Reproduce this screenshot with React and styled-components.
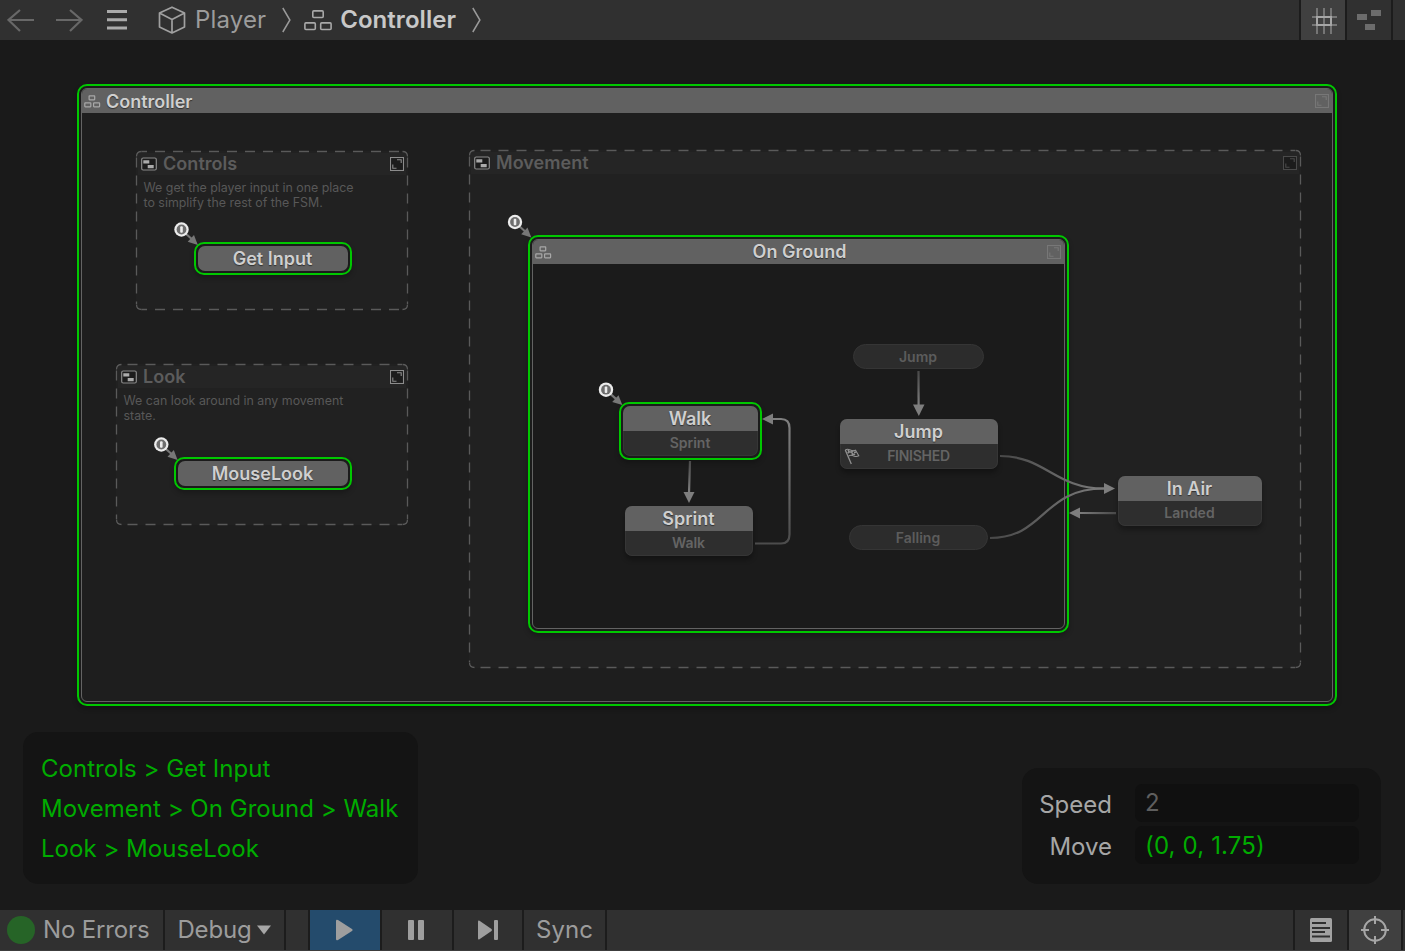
import React from "react";
import styled, { createGlobalStyle, css } from "styled-components";

const GlobalStyle = createGlobalStyle`
  * {
    box-sizing: border-box;
  }
  body {
    margin: 0;
    overflow: hidden;
    background: #1a1a1a;
    font-family: Inter, "Liberation Sans", sans-serif;
  }
  svg {
    display: block;
    flex: none;
  }
`;

const Editor = styled.div`
  display: flex;
  flex-direction: column;
  width: 1405px;
  height: 951px;
`;

const Bar = styled.div`
  display: flex;
  height: 40px;
  gap: 2px;
  background: #1c1c1c;
  color: #9c9c9c;
  font-size: 24px;
  white-space: nowrap;
`;

const BottomBar = styled(Bar)`
  height: 41px;
  border-bottom: 1px solid #3c3c3c;
`;

const Cell = styled.div`
  display: flex;
  align-items: center;
  justify-content: ${(p) => p.$justify || "center"};
  width: ${(p) => (p.$width ? `${p.$width}px` : "auto")};
  flex: ${(p) => (p.$grow ? "1" : "none")};
  background: ${(p) => p.$bg || "#303030"};
  letter-spacing: ${(p) => p.$spacing || "-0.15px"};
`;

const Label = styled.span`
  line-height: 30px;
`;

const Nav = styled.div`
  display: flex;
  align-items: center;
  gap: 20px;
  padding: 0 31px 0 7px;
`;

const Crumb = styled.div`
  display: flex;
  align-items: center;
  gap: ${(p) => p.$gap}px;
  margin-right: ${(p) => p.$after}px;
  margin-left: ${(p) => p.$before || 0}px;
  color: ${(p) => (p.$current ? "#c8c8c8" : "#9c9c9c")};
  font-weight: ${(p) => (p.$current ? 600 : 400)};
  letter-spacing: ${(p) => (p.$current ? "0.05px" : "0.15px")};
`;

const StatusDot = styled.span`
  width: 28px;
  height: 28px;
  margin: 0 8px 0 7px;
  border-radius: 50%;
  background: #266427;
`;

const Canvas = styled.div`
  position: relative;
  flex: 1;
  background: #1a1a1a;
`;

const placed = css`
  position: absolute;
  left: ${(p) => p.$x}px;
  top: ${(p) => p.$y - 40}px;
  width: ${(p) => p.$w}px;
  height: ${(p) => p.$h}px;
`;

/* a running machine or state gets the green ring */
const Ring = styled.div`
  ${placed}
  display: flex;
  padding: 2px;
  border: 2px solid #00c800;
  border-radius: 10px;
  background: #1b1b1b;
  box-shadow: 0 3px 5px rgba(0, 0, 0, 0.25);
`;

const Machine = styled.div`
  flex: 1;
  display: flex;
  flex-direction: column;
  border: 1px solid #636363;
  border-radius: 6px;
  background: ${(p) => p.$bg};
`;

const MachineHead = styled.div`
  display: flex;
  align-items: center;
  gap: 5px;
  height: 24px;
  padding: 0 3px 0 2px;
  border-radius: 5px 5px 0 0;
  background: #616161;
`;

const Title = styled.div`
  flex: ${(p) => (p.$fill ? 1 : "none")};
  text-align: center;
  color: #cfcfcf;
  font-size: 18px;
  font-weight: 600;
  line-height: ${(p) => p.$line || 24}px;
  text-shadow: 0 1px 1px rgba(0, 0, 0, 0.5);
`;

const RootTitle = styled(Title)`
  padding-top: 1px;
`;

const Spacer = styled.div`
  flex: 1;
`;

const State = styled.div`
  flex: 1;
  display: flex;
  flex-direction: column;
  overflow: hidden;
  border-radius: 7px;
  background: #2e2e2e;
`;

const StateHead = styled.div`
  height: ${(p) => (p.$only ? "100%" : "25px")};
  padding-right: 1px;
  background: #616161;
`;

const StateEvent = styled.div`
  display: grid;
  grid-template-columns: 20px 1fr 20px;
  align-items: center;
  flex: 1;
  padding: 0 4px 0 3px;
  border: 1px solid #363636;
  border-top: 0;
  border-radius: 0 0 7px 7px;
  color: #646464;
  font-size: 14px;
  font-weight: 600;
  line-height: 24px;
  text-align: center;
`;

const EventLabel = styled.span`
  grid-column: 2;
  letter-spacing: ${(p) => (p.$tight ? "-0.25px" : "0")};
`;

const Loose = styled.div`
  ${placed}
  display: flex;
  border-radius: 7px;
  box-shadow: 0 4px 5px rgba(0, 0, 0, 0.3);
`;

const GlobalEvent = styled.div`
  ${placed}
  padding-right: 1px;
  border: 1px solid #353535;
  border-radius: 13px;
  background: #2c2c2c;
  color: #5c5c5c;
  font-size: 14px;
  font-weight: 600;
  line-height: 23px;
  text-align: center;
`;

const Group = styled.div`
  ${placed}
  border-radius: 6px;
  background: #212121;
`;

const GroupHead = styled.div`
  display: flex;
  align-items: center;
  gap: 6px;
  height: 22px;
  margin: 2px 2px 0;
  padding: 0 2px 0 3px;
  background: #252525;
`;

const GroupTitle = styled.div`
  flex: 1;
  color: #5c5c5c;
  font-size: 18px;
  font-weight: 600;
  line-height: 22px;
  letter-spacing: 0.05px;
`;

const Note = styled.p`
  margin: 5px 0 0 7.5px;
  color: #585858;
  font-size: 12.4px;
  line-height: 15px;
  white-space: pre-line;
`;

const Outline = styled.svg`
  position: absolute;
  inset: 0;
  overflow: visible;
`;

const Links = styled.svg`
  position: absolute;
  inset: 0;
`;

const ActivePanel = styled.div`
  ${placed}
  padding: 17px 18px;
  border-radius: 15px;
  background: #141414;
  color: #00ac00;
  font-size: 24px;
  line-height: 40px;
  letter-spacing: 0.03px;
  white-space: nowrap;
`;

const VariablePanel = styled.div`
  ${placed}
  display: grid;
  grid-template-columns: 90px 224px;
  grid-template-rows: 38px 38px;
  column-gap: 23px;
  row-gap: 4px;
  padding: 16px 0;
  border-radius: 16px;
  background: #141414;
  font-size: 24px;
`;

const VariableName = styled.div`
  color: #a6a6a6;
  line-height: 42px;
  text-align: right;
`;

const VariableValue = styled.div`
  padding-left: 10px;
  border-radius: 7px;
  background: #101010;
  color: ${(p) => (p.$live ? "#00ac00" : "#5e5e5e")};
  line-height: ${(p) => (p.$live ? 40 : 38)}px;
  letter-spacing: ${(p) => (p.$live ? "0.15px" : 0)};
`;

const FsmIcon = ({ small, color = "#a8a8a8" }) =>
  small ? (
    <svg width="17" height="13" fill="none" stroke={color} strokeWidth="1.2">
      <rect x="5.1" y="0.8" width="5.6" height="4" rx="0.5" />
      <rect x="0.8" y="7.8" width="6" height="4" rx="0.5" />
      <rect x="9.6" y="7.8" width="6" height="4" rx="0.5" />
    </svg>
  ) : (
    <svg width="28" height="21" fill="none" stroke={color} strokeWidth="1.6">
      <rect x="8.8" y="0.9" width="10.4" height="6.6" rx="1" />
      <rect x="0.9" y="12.9" width="10.4" height="6.6" rx="1" />
      <rect x="16.7" y="12.9" width="10.4" height="6.6" rx="1" />
    </svg>
  );

const GroupIcon = () => (
  <svg width="16" height="14">
    <rect x="0.7" y="1" width="14.6" height="12" rx="1.5" fill="#1c1c1c" stroke="#8a8a8a" strokeWidth="1.2" />
    <path d="M2.3 3.3h6v3.2h-6zM6.7 8h6v3.2h-6z" fill="#ababab" />
  </svg>
);

const ExpandIcon = ({ color = "#8c8c8c", fill = "#1c1c1c" }) => (
  <svg width="14" height="14" fill="none" stroke={color}>
    <rect x="0.5" y="0.5" width="13" height="13" fill={fill} strokeWidth="1.1" />
    <path d="M7 2.8h4.2V6M2.8 7.5v3.7H6.5" strokeWidth="1.1" />
  </svg>
);

const FlagIcon = () => (
  <svg width="17" height="17" fill="none" stroke="#909090" strokeWidth="1.1">
    <path d="M1.3 2 7.3 16" strokeWidth="1.3" />
    <path d="M1.3 2c2-1.4 3.3-.8 5 0s3.5 1 5.2.2l3.3 5.6c-1.8 1-3.4.8-5 .1s-3.2-1.2-5.3.2" />
    <path d="M4 1.7l1 2 2.5.2 1.2 2.2 2.5.3M7.5 3.9l2-1.5M5 3.7 3.8 5.3M8.7 6.1 7.6 7.6M10 4.5l2.3-.4" strokeWidth="1.5" />
  </svg>
);

const NavArrow = ({ flip }) => (
  <svg width="28" height="26" fill="none" stroke="#686868" strokeWidth="2.2">
    <path d={flip ? "M1 13h25.5M15 3l11.5 10L15 24" : "M27 13H1.5M13 3 1.5 13 13 24"} />
  </svg>
);

const CrumbArrow = () => (
  <svg width="10" height="26" fill="none" stroke="#9a9a9a" strokeWidth="1.5">
    <path d="M.8 1 7.9 13 .8 25" />
  </svg>
);

const CubeIcon = () => (
  <svg width="28" height="28" fill="none" stroke="#a0a0a0" strokeWidth="1.7" strokeLinejoin="round">
    <path d="M14 1.2 26.5 7v14L14 27 1.5 21V7zM1.5 7 14 13.4 26.5 7M14 13.4V27" />
  </svg>
);

const GroupFrame = ({ x, y, w, h, title, note, phase = 11.5, expand }) => (
  <Group $x={x} $y={y} $w={w} $h={h}>
    <GroupHead>
      <GroupIcon />
      <GroupTitle>{title}</GroupTitle>
      <ExpandIcon color={expand} />
    </GroupHead>
    {note && <Note>{note}</Note>}
    <Outline width={w} height={h} fill="none" stroke="#5a5a5a" strokeWidth="1.3">
      <g strokeDasharray="10 8" strokeDashoffset={5.5 - phase}>
        <path d={`M5.5 .5H${w - 6}`} />
        <path d={`M5.5 ${h - 0.5}H${w - 6}`} />
      </g>
      <g strokeDasharray="10 8" strokeDashoffset="-1">
        <path d={`M.5 5.5V${h - 6}`} />
        <path d={`M${w - 0.5} 5.5V${h - 6}`} />
      </g>
      <path
        d={`M.5 5.5Q.5 .5 5.5 .5M${w - 5.5} .5q5 0 5 5M${w - 0.5} ${h - 5.5}q0 5-5 5M5.5 ${h - 0.5}q-5 0-5-5`}
      />
    </Outline>
  </Group>
);

const StateNode = ({ x, y, w, h, name, event, active, final }) => {
  const Frame = active ? Ring : Loose;
  return (
    <Frame $x={x} $y={y} $w={w} $h={h}>
      <State>
        <StateHead $only={!event}>
          <Title $line={26}>{name}</Title>
        </StateHead>
        {event && (
          <StateEvent>
            {final && <FlagIcon />}
            <EventLabel $tight={final}>{event}</EventLabel>
          </StateEvent>
        )}
      </State>
    </Frame>
  );
};

const StartMarker = ({ x, y }) => (
  <g transform={`translate(${x} ${y})`}>
    <path d="M4 4 12 11" stroke="#777" strokeWidth="2.2" />
    <path d="M16.3 15.4 6.2 12.3 12.5 5.6z" fill="#777" />
    <circle r="7.2" fill="#ececec" />
    <circle r="4.9" fill="#6e6e6e" />
    <rect x="-1.3" y="-3.2" width="2.6" height="6.4" rx="1" fill="#ececec" />
  </g>
);

const Transitions = () => (
  <Links width="1405" height="870" viewBox="0 40 1405 870" fill="none">
    <defs>
      <linearGradient id="down" gradientUnits="userSpaceOnUse" x1="0" x2="0" y1="461" y2="493">
        <stop offset="0" stopColor="#484848" />
        <stop offset="1" stopColor="#808080" />
      </linearGradient>
      <linearGradient id="downJump" gradientUnits="userSpaceOnUse" x1="0" x2="0" y1="371" y2="406">
        <stop offset="0" stopColor="#484848" />
        <stop offset="1" stopColor="#808080" />
      </linearGradient>
      <linearGradient id="up" x1="0" x2="0" y1="1" y2="0">
        <stop offset="0" stopColor="#4c4c4c" />
        <stop offset="1" stopColor="#808080" />
      </linearGradient>
      <linearGradient id="right">
        <stop offset="0" stopColor="#484848" />
        <stop offset="1" stopColor="#7c7c7c" />
      </linearGradient>
      <linearGradient id="left" gradientUnits="userSpaceOnUse" x1="1116" x2="1080" y1="0" y2="0">
        <stop offset="0" stopColor="#484848" />
        <stop offset="1" stopColor="#7c7c7c" />
      </linearGradient>
    </defs>
    <g strokeWidth="2.2">
      <path d="M690 461 689 493" stroke="url(#down)" />
      <path d="M918.5 371 918.6 406" stroke="url(#downJump)" />
      <path d="M755 543.5H781Q789.5 543.5 789.5 534.5V428Q789.5 419 781 419H772" stroke="url(#up)" />
      <path d="M1000 456C1045 456 1055 488.5 1104 488.5" stroke="url(#right)" />
      <path d="M990 538C1045 538 1042 488.5 1104 488.5" stroke="url(#right)" />
      <path d="M1116 513.2 1080 513" stroke="url(#left)" />
    </g>
    <g fill="#7e7e7e">
      <path d="M683.5 492h11L689 503z" />
      <path d="M913 404.5h11.5L918.8 416z" />
      <path d="M773 413.5v11L762 419z" />
      <path d="M1104 483v11l11-5.5z" />
      <path d="M1080 507.5v11l-11-5.5z" />
    </g>
    <StartMarker x={181.5} y={229.5} />
    <StartMarker x={161.3} y={444.5} />
    <StartMarker x={515} y={222} />
    <StartMarker x={606} y={389.7} />
  </Links>
);

const App = () => {
  return (
    <>
      <GlobalStyle />
      <Editor>
        <Bar>
          <Cell $grow $justify="flex-start">
            <Nav>
              <NavArrow />
              <NavArrow flip />
              <svg width="24" height="20" fill="#aaaaaa">
                <path d="M4 0h20v3H4zM4 8.3h20v3H4zM4 16.5h20v3H4z" />
              </svg>
            </Nav>
            <Crumb $gap={9} $after={16}>
              <CubeIcon />
              <Label>Player</Label>
            </Crumb>
            <CrumbArrow />
            <Crumb $current $gap={8} $after={16} $before={12}>
              <FsmIcon />
              <Label>Controller</Label>
            </Crumb>
            <CrumbArrow />
          </Cell>
          <Cell $width={44} $bg="#404040">
            <svg width="28" height="28" viewBox="-2 -2 28 28" fill="none" strokeWidth="2">
              <path d="M6 0v26M13 0v26M20 0v26M1 9h26M1 17h26" stroke="#757575" />
              <path d="M6 9h14v8H6z" stroke="#a6a6a6" />
            </svg>
          </Cell>
          <Cell $width={44}>
            <svg width="26" height="22" fill="#6c6c6c">
              <path d="M1 5h10v6H1zM15 1h10v6H15zM9 15h10v6H9z" />
            </svg>
          </Cell>
          <Cell $width={12} />
        </Bar>

        <Canvas>
          <Ring $x={77} $y={84} $w={1260} $h={622}>
            <Machine $bg="#1e1e1e">
              <MachineHead>
                <FsmIcon small />
                <RootTitle>Controller</RootTitle>
                <Spacer />
                <ExpandIcon color="#777777" fill="none" />
              </MachineHead>
            </Machine>
          </Ring>

          <GroupFrame
            x={136}
            y={151}
            w={272}
            h={159}
            phase={1}
            title="Controls"
            note={"We get the player input in one place\nto simplify the rest of the FSM."}
          />
          <GroupFrame
            x={116}
            y={364}
            w={292}
            h={161}
            title="Look"
            note={"We can look around in any movement\nstate."}
          />
          <GroupFrame x={469} y={150} w={832} h={518} title="Movement" expand="#4a4a4a" />

          <Ring $x={528} $y={235} $w={541} $h={398}>
            <Machine $bg="#1b1b1b">
              <MachineHead>
                <FsmIcon small />
                <Title $fill>On Ground</Title>
                <ExpandIcon color="#777777" fill="none" />
              </MachineHead>
            </Machine>
          </Ring>

          <StateNode active x={194} y={242} w={158} h={33} name="Get Input" />
          <StateNode active x={174} y={457} w={178} h={33} name="MouseLook" />
          <StateNode active x={619} y={402} w={143} h={58} name="Walk" event="Sprint" />
          <StateNode x={625} y={506} w={128} h={50} name="Sprint" event="Walk" />
          <StateNode final x={840} y={419} w={158} h={50} name="Jump" event="FINISHED" />
          <StateNode x={1118} y={476} w={144} h={50} name="In Air" event="Landed" />
          <GlobalEvent $x={853} $y={344} $w={131} $h={25}>Jump</GlobalEvent>
          <GlobalEvent $x={849} $y={525} $w={139} $h={25}>Falling</GlobalEvent>

          <Transitions />

          <ActivePanel $x={23} $y={732} $w={395} $h={152}>
            <div>Controls &gt; Get Input</div>
            <div>Movement &gt; On Ground &gt; Walk</div>
            <div>Look &gt; MouseLook</div>
          </ActivePanel>

          <VariablePanel $x={1022} $y={768} $w={359} $h={116}>
            <VariableName>Speed</VariableName>
            <VariableValue>2</VariableValue>
            <VariableName>Move</VariableName>
            <VariableValue $live>(0, 0, 1.75)</VariableValue>
          </VariablePanel>
        </Canvas>

        <BottomBar>
          <Cell $width={163} $justify="flex-start">
            <StatusDot />
            <Label>No Errors</Label>
          </Cell>
          <Cell $width={119}>
            <Label>Debug</Label>
            <svg width="20" height="10" fill="#a6a6a6">
              <path d="M5 .5h14L12 9.5z" />
            </svg>
          </Cell>
          <Cell $width={22} />
          <Cell $width={70} $bg="#244b6c">
            <svg width="18" height="22" fill="#9e9e9e">
              <path d="M0 2q0-2 2-1L16 10q1.5 1 0 2L2 21Q0 22 0 20z" />
            </svg>
          </Cell>
          <Cell $width={70}>
            <svg width="18" height="20" fill="#9e9e9e">
              <rect width="6" height="20" rx="1" />
              <rect x="10" width="6" height="20" rx="1" />
            </svg>
          </Cell>
          <Cell $width={68}>
            <svg width="22" height="20" fill="#9e9e9e">
              <path d="M1 1.5Q1 0 2.5.8L14.5 9q1 1 0 2L2.5 19.2Q1 20 1 18.5z" />
              <rect x="17" width="4" height="20" rx="1" />
            </svg>
          </Cell>
          <Cell $width={81} $spacing="0">
            <Label>Sync</Label>
          </Cell>
          <Cell $grow />
          <Cell $width={52}>
            <svg width="22" height="24">
              <rect width="22" height="24" rx="1.5" fill="#a2a2a2" />
              <path d="M2 5h14M2 10h18M2 14h13M2 18.5h18" stroke="#303030" strokeWidth="2" />
            </svg>
          </Cell>
          <Cell $width={52} $bg="#404040">
            <svg width="28" height="28" fill="none" stroke="#a6a6a6" strokeWidth="2">
              <circle cx="14" cy="14" r="10.8" />
              <path d="M14 0v8M14 20v8M0 14h8M20 14h8" />
            </svg>
          </Cell>
          <Cell $width={2} />
        </BottomBar>
      </Editor>
    </>
  );
};

export default App;
